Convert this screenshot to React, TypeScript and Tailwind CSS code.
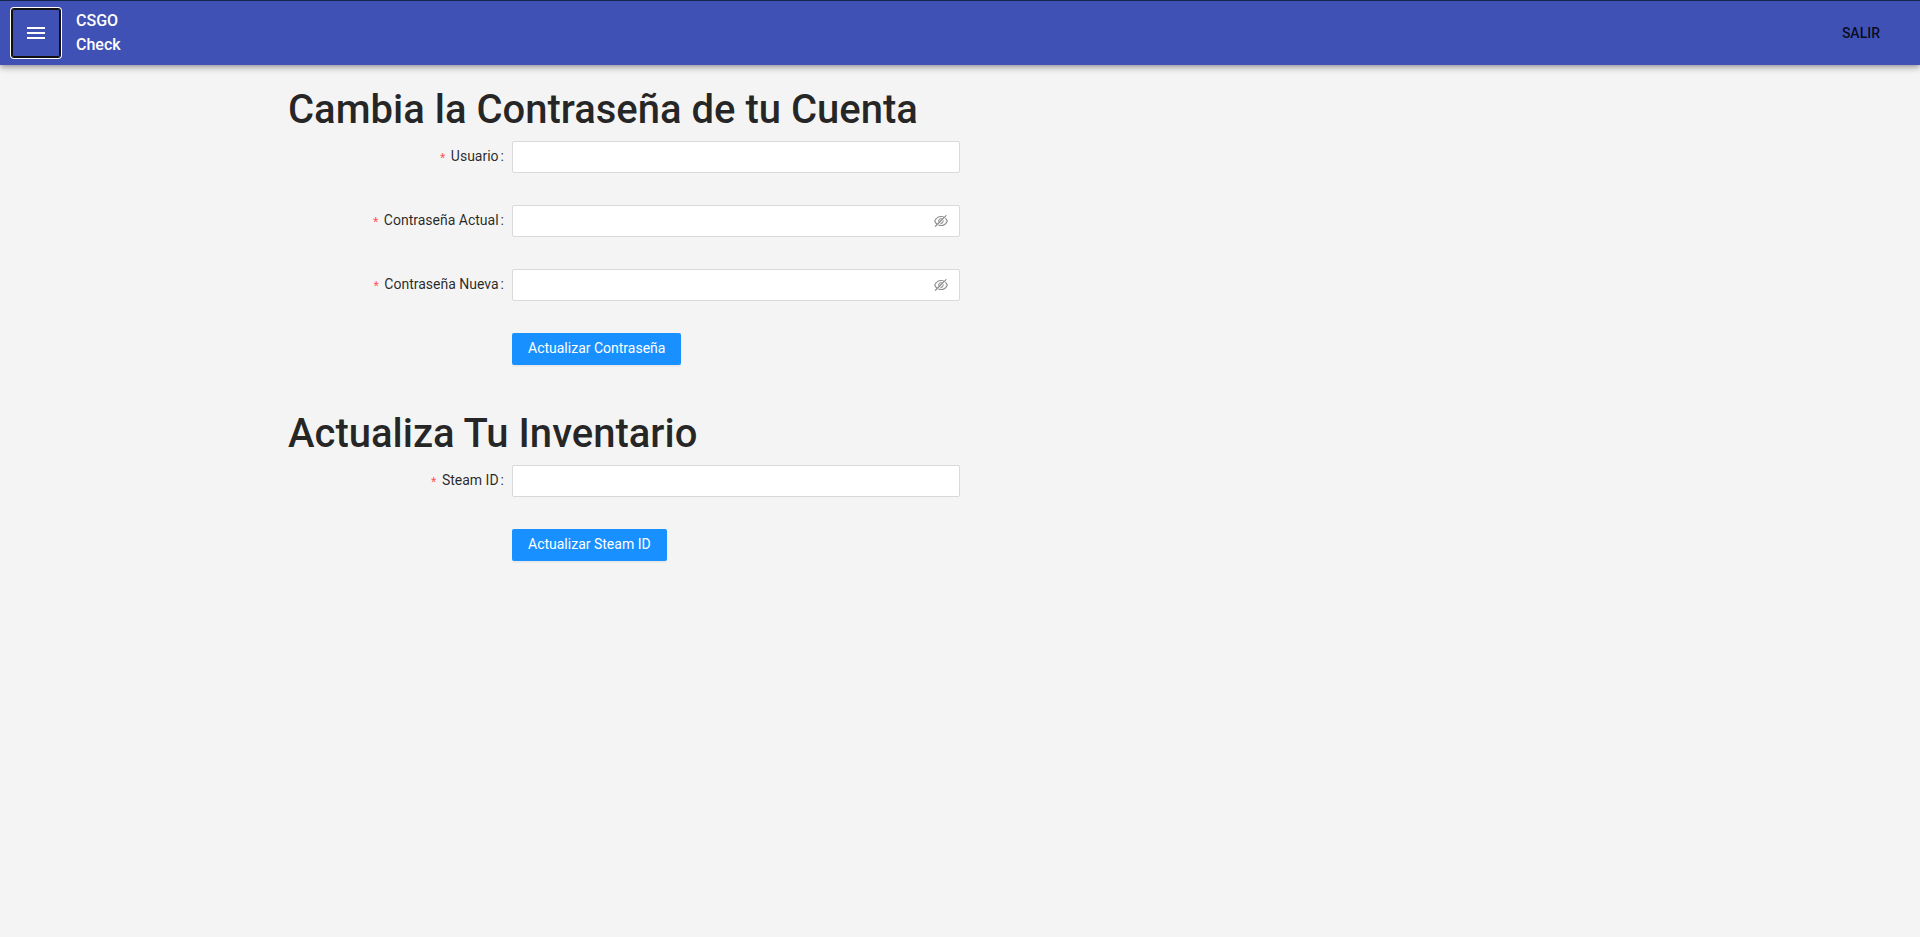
import { useState, type ReactNode } from "react";
import { AiOutlineEye, AiOutlineEyeInvisible } from "react-icons/ai";
import { MdMenu } from "react-icons/md";

function FormRow({ id, label, children }: { id: string; label: string; children: ReactNode }) {
  return (
    <div className="mb-8 grid grid-cols-6">
      <label
        htmlFor={id}
        className="flex h-8 items-center justify-end pr-2 pb-0.5 text-sm whitespace-nowrap text-black/85"
      >
        <span aria-hidden="true" className="mr-1 pt-2 font-['Liberation_Mono',monospace] leading-none text-[#ff4d4f]">
          *
        </span>
        {label}
        <span className="ml-0.5">:</span>
      </label>
      <div className="col-span-2">{children}</div>
    </div>
  );
}

const inputClass =
  "h-8 w-full rounded-xs border border-[#d9d9d9] bg-white px-3 text-sm text-black/85 outline-none focus:border-[#40a9ff]";

function TextField({ id, label }: { id: string; label: string }) {
  return (
    <FormRow id={id} label={label}>
      <input id={id} type="text" required className={inputClass} />
    </FormRow>
  );
}

function PasswordField({ id, label }: { id: string; label: string }) {
  const [visible, setVisible] = useState(false);
  const Icon = visible ? AiOutlineEye : AiOutlineEyeInvisible;
  return (
    <FormRow id={id} label={label}>
      <div className="flex h-8 w-full items-center rounded-xs border border-[#d9d9d9] bg-white px-[11px] focus-within:border-[#40a9ff]">
        <input
          id={id}
          type={visible ? "text" : "password"}
          required
          className="min-w-0 flex-1 bg-transparent text-sm text-black/85 outline-none"
        />
        <button
          type="button"
          aria-label="Mostrar contraseña"
          onClick={() => setVisible(!visible)}
          className="cursor-pointer text-black/45"
        >
          <Icon size={14} viewBox="64 64 896 896" />
        </button>
      </div>
    </FormRow>
  );
}

function SubmitRow({ children }: { children: ReactNode }) {
  return (
    <div className="mb-8 grid grid-cols-6">
      <div className="col-span-2 col-start-2">
        <button
          type="submit"
          className="h-8 cursor-pointer rounded-xs bg-[#1890ff] px-4 pb-0.5 text-sm whitespace-nowrap text-white shadow-[0_2px_0_rgba(0,0,0,0.045)]"
        >
          {children}
        </button>
      </div>
    </div>
  );
}

function Title({ children }: { children: ReactNode }) {
  return <h1 className="pt-[13px] pb-[7px] text-[40px] leading-12 font-medium text-black/85">{children}</h1>;
}

export default function App() {
  return (
    <div className="min-h-screen bg-[#f4f4f4] font-[Roboto,sans-serif]">
      <header className="flex items-center justify-between border-t border-[#14254a] bg-[#3f51b5] px-3 py-2 shadow-[0_2px_4px_-1px_rgba(0,0,0,0.2),0_4px_5px_0_rgba(0,0,0,0.14),0_1px_10px_0_rgba(0,0,0,0.12)]">
        <div className="flex items-center gap-4">
          <button
            type="button"
            aria-label="Menú"
            className="flex size-12 cursor-pointer items-center justify-center rounded-xs text-white shadow-[inset_0_0_0_1px_#101010,0_0_0_1px_#101010,0_0_0_2px_#fff]"
          >
            <MdMenu size={24} />
          </button>
          <a href="#" className="w-12 text-base leading-6 font-medium text-white">
            CSGO Check
          </a>
        </div>
        <button type="button" className="mr-3 cursor-pointer px-4 text-sm font-medium text-black/85 uppercase">
          Salir
        </button>
      </header>
      <main className="mx-auto w-[70%] pt-2">
        <Title>Cambia la Contraseña de tu Cuenta</Title>
        <form onSubmit={(e) => e.preventDefault()}>
          <TextField id="usuario" label="Usuario" />
          <PasswordField id="actual" label="Contraseña Actual" />
          <PasswordField id="nueva" label="Contraseña Nueva" />
          <SubmitRow>Actualizar Contraseña</SubmitRow>
        </form>
        <Title>Actualiza Tu Inventario</Title>
        <form onSubmit={(e) => e.preventDefault()}>
          <TextField id="steam" label="Steam ID" />
          <SubmitRow>Actualizar Steam ID</SubmitRow>
        </form>
      </main>
    </div>
  );
}
